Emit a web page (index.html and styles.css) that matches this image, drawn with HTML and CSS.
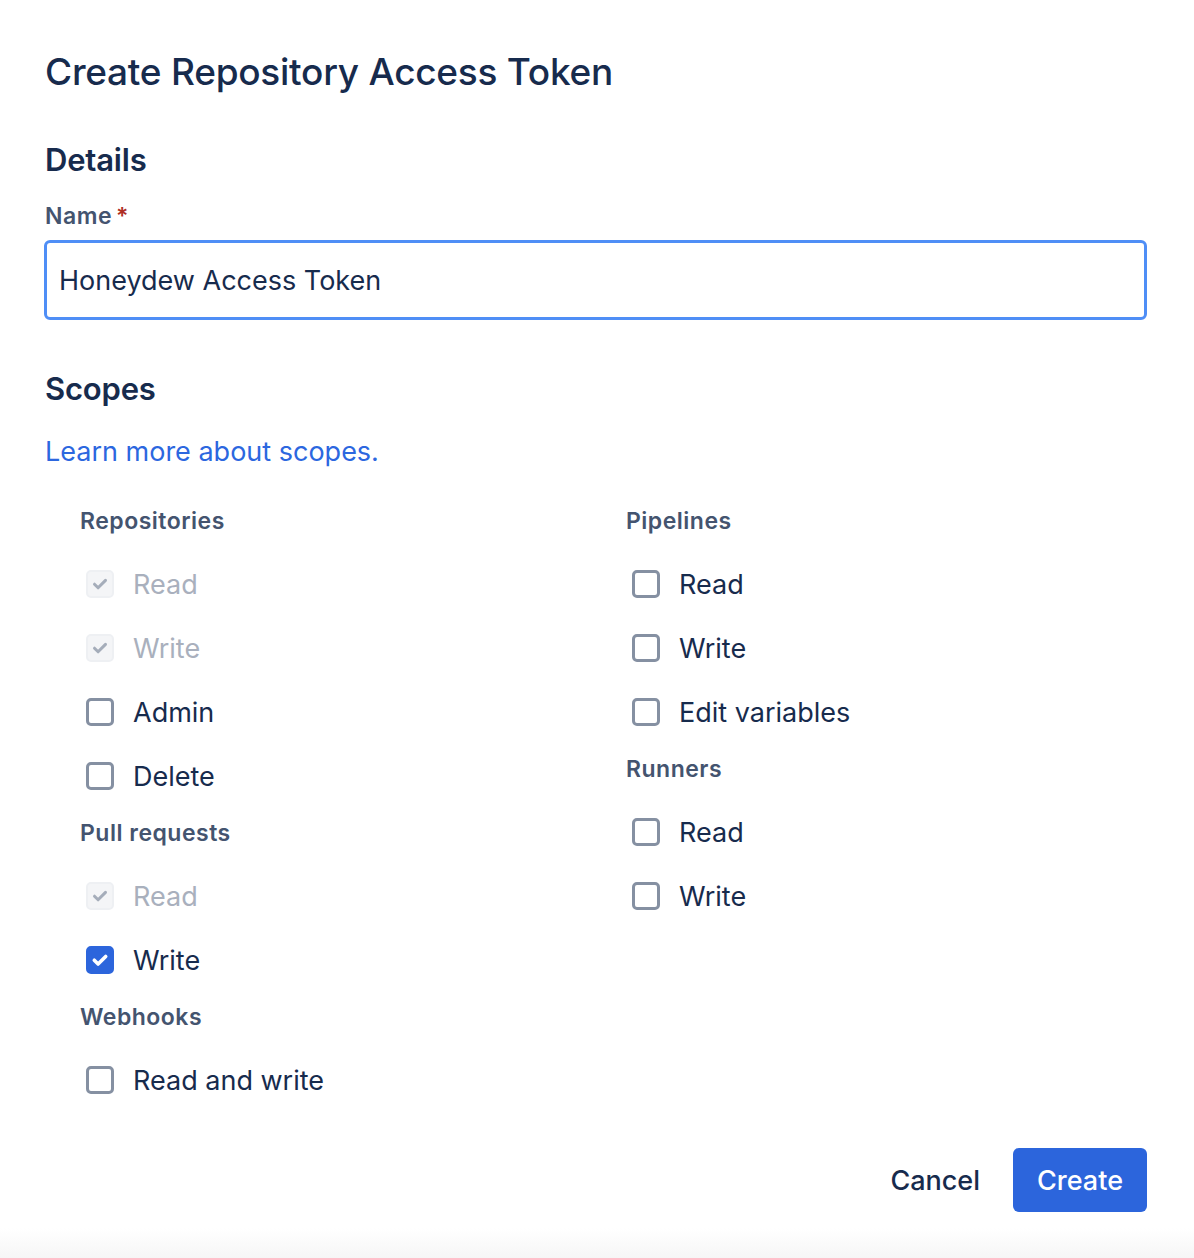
FILE: index.html
```html
<!DOCTYPE html>
<html lang="en">
<head>
<meta charset="utf-8">
<title>Create Repository Access Token</title>
<link rel="stylesheet" href="styles.css">
</head>
<body>
<div class="dialog">
  <h1 class="title">Create Repository Access Token</h1>
  <h2 class="section">Details</h2>
  <div class="label">Name<span class="req">*</span></div>
  <div class="input">Honeydew Access Token</div>
  <h2 class="section scopes">Scopes</h2>
  <a class="link" href="#">Learn more about scopes.</a>

  <div class="cols">
    <div class="col">
      <div class="group">Repositories</div>
      <div class="row disabled"><span class="cb cb-dis"><svg viewBox="0 0 28 28"><path d="M8.5 14.2l3.6 3.6 7.4-7.4" fill="none" stroke="#A5ADBA" stroke-width="3" stroke-linecap="round" stroke-linejoin="round"/></svg></span><span class="txt">Read</span></div>
      <div class="row disabled"><span class="cb cb-dis"><svg viewBox="0 0 28 28"><path d="M8.5 14.2l3.6 3.6 7.4-7.4" fill="none" stroke="#A5ADBA" stroke-width="3" stroke-linecap="round" stroke-linejoin="round"/></svg></span><span class="txt">Write</span></div>
      <div class="row"><span class="cb"></span><span class="txt">Admin</span></div>
      <div class="row"><span class="cb"></span><span class="txt">Delete</span></div>
      <div class="group">Pull requests</div>
      <div class="row disabled"><span class="cb cb-dis"><svg viewBox="0 0 28 28"><path d="M8.5 14.2l3.6 3.6 7.4-7.4" fill="none" stroke="#A5ADBA" stroke-width="3" stroke-linecap="round" stroke-linejoin="round"/></svg></span><span class="txt">Read</span></div>
      <div class="row"><span class="cb cb-on"><svg viewBox="0 0 28 28"><path d="M8.3 14.2l3.8 3.8 7.6-7.6" fill="none" stroke="#FFFFFF" stroke-width="3.6" stroke-linecap="round" stroke-linejoin="round"/></svg></span><span class="txt">Write</span></div>
      <div class="group">Webhooks</div>
      <div class="row"><span class="cb"></span><span class="txt">Read and write</span></div>
    </div>
    <div class="col">
      <div class="group">Pipelines</div>
      <div class="row"><span class="cb"></span><span class="txt">Read</span></div>
      <div class="row"><span class="cb"></span><span class="txt">Write</span></div>
      <div class="row"><span class="cb"></span><span class="txt">Edit variables</span></div>
      <div class="group">Runners</div>
      <div class="row"><span class="cb"></span><span class="txt">Read</span></div>
      <div class="row"><span class="cb"></span><span class="txt">Write</span></div>
    </div>
  </div>

  <div class="footer">
    <button class="btn btn-subtle">Cancel</button>
    <button class="btn btn-primary">Create</button>
  </div>
</div>
</body>
</html>
```

FILE: styles.css
```css
html, body {
  margin: 0;
  padding: 0;
}
body {
  background: linear-gradient(to bottom, #ffffff 0, #ffffff 1228px, #f6f6f6 1258px);
  font-family: Inter, "Noto Sans", "Liberation Sans", sans-serif;
  color: #172B4D;
  height: 1258px;
  overflow: hidden;
}
.dialog {
  padding: 48px 47px 0 45px;
  height: 1232px;
  box-sizing: border-box;
}
.title {
  margin: 0;
  font-size: 37px;
  line-height: 48px;
  font-weight: 500;
  letter-spacing: -0.25px;
}
.section {
  margin: 44px 0 0 0;
  font-size: 31px;
  line-height: 40px;
  font-weight: 600;
  letter-spacing: -0.2px;
}
.label {
  margin: 22px 0 0 0;
  font-size: 23px;
  line-height: 28px;
  font-weight: 600;
  letter-spacing: 0.5px;
  color: #44546F;
}
.req {
  color: #AE2E24;
  margin-left: 4px;
}
.input {
  margin: 10px 0 0 -1px;
  height: 80px;
  box-sizing: border-box;
  border: 3px solid #4F8EF6;
  border-radius: 6px;
  padding: 0 12px;
  display: flex;
  align-items: center;
  font-size: 27px;
  color: #172B4D;
}
.section.scopes {
  margin-top: 49px;
}
.link {
  display: block;
  margin: 25px 0 0 0;
  font-size: 27px;
  line-height: 36px;
  color: #2C67DF;
  text-decoration: none;
}
.cols {
  display: grid;
  grid-template-columns: 546px 546px;
  margin-top: 37px;
  padding-left: 35px;
}
.col {
  display: flex;
  flex-direction: column;
}
.group {
  font-size: 23px;
  line-height: 28px;
  font-weight: 600;
  letter-spacing: 0.5px;
  color: #44546F;
  margin: 11px 0 17px 0;
}
.group:first-child {
  margin-top: 0;
}
.row {
  height: 64px;
  display: flex;
  align-items: center;
  padding-left: 6px;
  font-size: 27px;
}
.cb {
  width: 28px;
  height: 28px;
  box-sizing: border-box;
  border: 3px solid #8590A2;
  border-radius: 5px;
  margin-right: 19px;
  position: relative;
  flex: none;
}
.cb svg {
  position: absolute;
  left: -3px;
  top: -3px;
  width: 28px;
  height: 28px;
}
.cb-on {
  background: #2C65DC;
  border-color: #2C65DC;
}
.cb-dis {
  background: #F4F5F7;
  border: 2px solid #EEF0F3;
}
.cb-dis svg {
  left: -2px;
  top: -2px;
}
.row.disabled .txt {
  color: #A9B0BD;
}
.footer {
  display: flex;
  justify-content: flex-end;
  gap: 9px;
  margin-top: 36px;
}
.btn {
  height: 64px;
  padding: 0 24px;
  border: none;
  border-radius: 6px;
  font-family: inherit;
  font-size: 27px;
  font-weight: 500;
  cursor: pointer;
}
.btn-subtle {
  background: transparent;
  color: #172B4D;
}
.btn-primary {
  background: #2C65DC;
  color: #ffffff;
}
```
